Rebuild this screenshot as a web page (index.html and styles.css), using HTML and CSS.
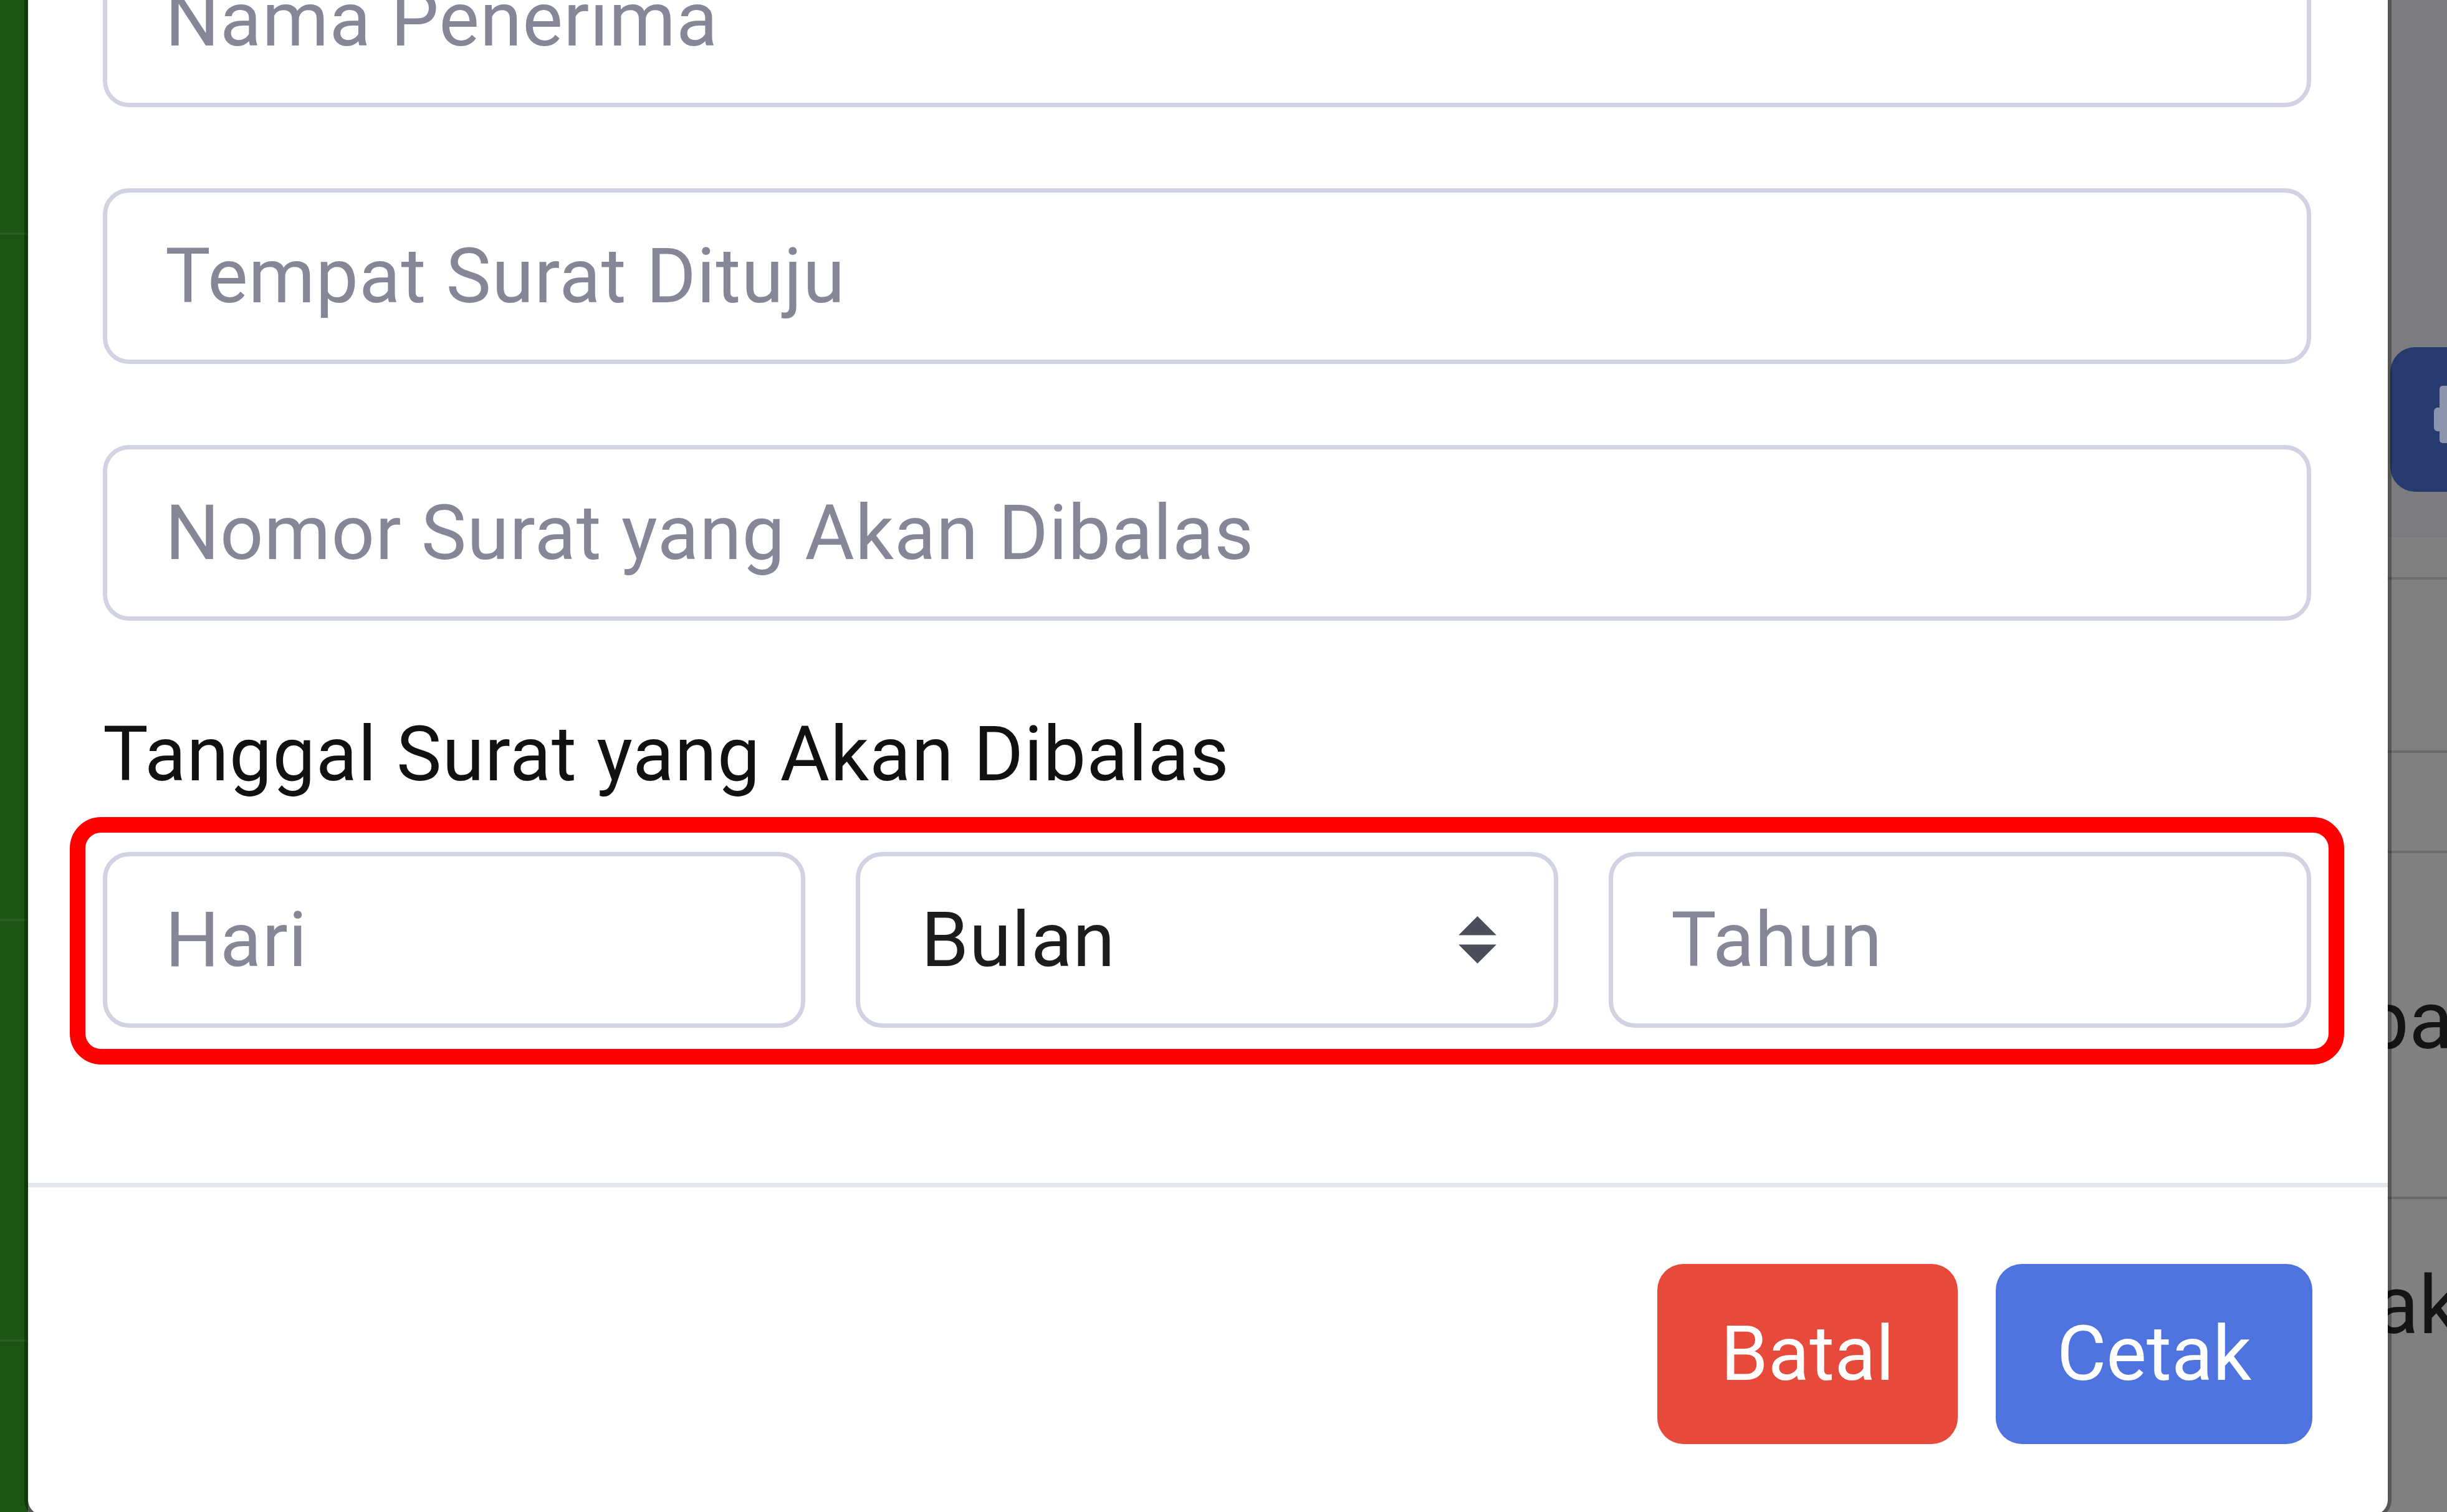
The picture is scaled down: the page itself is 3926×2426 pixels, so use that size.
FILE: index.html
```html
<!DOCTYPE html>
<html lang="id">
<head>
<meta charset="utf-8">
<title>Cetak Surat Balasan</title>
<link rel="stylesheet" href="styles.css">
</head>
<body>
<div class="page">
  <aside class="sidebar">
    <div class="sb-sec sb-a"></div>
    <div class="sb-sec sb-b"></div>
    <div class="sb-sec sb-c"></div>
  </aside>
  <main class="under"></main>
  <div class="edge">
    <div class="edge-top">
      <div class="add-btn">
        <svg class="add-icon" viewBox="0 0 60 110" width="60" height="110" aria-hidden="true">
          <rect x="11" y="0" width="26" height="92" rx="5" fill="#8d95ad"/>
          <rect x="2" y="35" width="40" height="38" rx="6" fill="#8d95ad"/>
        </svg>
      </div>
    </div>
    <div class="card">
      <div class="card-head"></div>
      <div class="trow trow-h"></div>
      <div class="trow trow-1"></div>
      <div class="trow trow-2"><span class="cell-text cell-pa">pa</span></div>
      <div class="trow trow-3"><span class="cell-text cell-ak">akan</span></div>
    </div>
  </div>
</div>

<div class="modal">
  <div class="modal-body">
    <input class="form-control fg" type="text" placeholder="Nama Penerima">
    <input class="form-control fg" type="text" placeholder="Tempat Surat Dituju">
    <input class="form-control fg fg-last" type="text" placeholder="Nomor Surat yang Akan Dibalas">
    <label class="date-label">Tanggal Surat yang Akan Dibalas</label>
    <div class="date-row">
      <input class="form-control" type="text" placeholder="Hari">
      <div class="form-control select">
        <span class="select-value">Bulan</span>
        <svg class="select-arrow" viewBox="0 0 4 5" aria-hidden="true"><path d="M2 0L0 2h4zm0 5L0 3h4z" fill="#4b4e5a"/></svg>
      </div>
      <input class="form-control" type="text" placeholder="Tahun">
    </div>
  </div>
  <div class="modal-footer">
    <button class="btn btn-danger" type="button">Batal</button>
    <button class="btn btn-primary" type="button">Cetak</button>
  </div>
</div>
</body>
</html>
```
FILE: styles.css
```css
* {
  box-sizing: border-box;
}

html,
body {
  margin: 0;
  width: 3926px;
  height: 2426px;
  overflow: hidden;
}

body {
  position: relative;
  font-family: Roboto, "Liberation Sans", sans-serif;
  background: #7c7c7e;
}

/* ---------- page behind the modal ---------- */
.page {
  display: flex;
  height: 2426px;
}

.sidebar {
  width: 45px;
  background: #1b5413;
  display: flex;
  flex-direction: column;
}

.sb-sec {
  border-bottom: 4px solid #2b5c24;
}

.sb-a { height: 377px; }
.sb-b { height: 1101px; }
.sb-c { height: 675px; }

.under {
  flex: 1;
  background: #7c7c7e;
}

.edge {
  width: 95px;
  overflow: hidden;
  display: flex;
  flex-direction: column;
  background: #7c7c7e;
}

.edge-top {
  height: 859px;
  padding-top: 557px;
  flex: none;
}

.add-btn {
  width: 220px;
  height: 232px;
  margin-left: 4px;
  background: #273a70;
  border-radius: 40px;
  display: flex;
  align-items: center;
  padding-left: 68px;
}

.add-icon {
  flex: none;
  width: 60px;
  height: 110px;
  margin-top: 2px;
}

.card {
  flex: 1;
  display: flex;
  flex-direction: column;
  background: #808080;
  border-top: 3px solid #79797b;
}

.card-head {
  height: 64px;
  flex: none;
}

.trow {
  flex: none;
  border-top: 4px solid #6b6b6e;
}

.trow-h { height: 278px; }
.trow-1 { height: 161px; }
.trow-2 { height: 555px; padding-top: 204px; }
.trow-3 { flex: 1; padding-top: 106px; }

.cell-text {
  display: block;
  font-size: 130px;
  line-height: 1;
  color: #141414;
  white-space: nowrap;
}

.cell-pa { margin-left: -39px; }
.cell-ak { margin-left: -21px; }

/* ---------- modal ---------- */
.modal {
  position: absolute;
  left: 39px;
  top: -238px;
  width: 3798px;
  background: #fff;
  background-clip: padding-box;
  border: 6px solid rgba(0, 0, 0, 0.32);
  border-radius: 29px;
}

.modal-body {
  padding: 122px 123px 249px 120px;
}

.form-control {
  display: block;
  width: 100%;
  height: 282px;
  margin: 0;
  padding: 0 93px;
  border: 7px solid #d1d3e2;
  border-radius: 42px;
  background: #fff;
  font-family: Roboto, "Liberation Sans", sans-serif;
  font-size: 122px;
  letter-spacing: 1px;
  color: #1c1c1c;
  outline: none;
}

.form-control::placeholder {
  color: #858796;
  opacity: 1;
}

.fg {
  margin-bottom: 130px;
}

.fg-last {
  margin-bottom: 123px;
}

.date-label {
  display: block;
  font-size: 122px;
  letter-spacing: 1px;
  line-height: 183px;
  color: #111;
  margin-bottom: 65px;
}

.date-row {
  position: relative;
  display: grid;
  grid-template-columns: repeat(3, 1fr);
  gap: 81px;
}

.date-row::after {
  content: "";
  position: absolute;
  top: -56px;
  bottom: -59px;
  left: -53px;
  right: -53px;
  border: 25px solid #ff0000;
  border-radius: 50px;
  pointer-events: none;
}

.select {
  display: flex;
  align-items: center;
  justify-content: space-between;
  padding: 0 92px 0 98px;
}

.select-value {
  color: #1c1c1c;
}

.select-arrow {
  width: 61px;
  height: 76px;
  flex: none;
}

.modal-footer {
  display: flex;
  justify-content: flex-end;
  gap: 61px;
  border-top: 7px solid #e3e6f0;
  padding: 123px 121px 113px 0;
}

.btn {
  height: 289px;
  border: 0;
  border-radius: 42px;
  font-family: Roboto, "Liberation Sans", sans-serif;
  font-size: 122px;
  color: #fff;
  display: flex;
  align-items: center;
  justify-content: center;
  padding: 0;
}

.btn-danger {
  width: 482px;
  background: #e74a3b;
}

.btn-primary {
  width: 508px;
  background: #4e73df;
}
```
